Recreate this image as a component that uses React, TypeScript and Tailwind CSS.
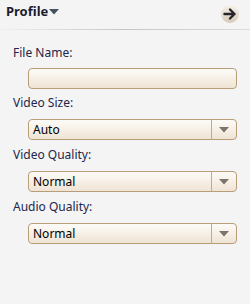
import React from 'react';

interface FieldProps {
  label: string;
  value?: string;
  select?: boolean;
  first?: boolean;
  className?: string;
}

const ArrowButton: React.FC = () => (
  <div className="mt-[5px] h-[18px] w-[18px] rounded-full bg-gradient-to-b from-[#f6f1e8] to-[#d6cbb8] flex items-center justify-center">
    <svg width="14" height="12" viewBox="0 0 14 12">
      <path d="M1.5 6h10M7 1.5l4.5 4.5L7 10.5" fill="none" stroke="#26262c" strokeWidth="2.4" strokeLinecap="round" strokeLinejoin="round" />
    </svg>
  </div>
);

const Field: React.FC<FieldProps> = ({ label, value = '', select, first, className = '' }) => (
  <div className={`flex flex-col ${className}`}>
    <div className="text-[12px] leading-[16px] text-[#23264a]">{label}</div>
    <div
      className={`${first ? 'mt-[7px]' : 'mt-[8px]'} ml-[15px] w-[209px] h-[21px] rounded-[4px] border border-[#b89e78] bg-gradient-to-b from-[#fdfbf8] to-[#efe4d4] flex items-stretch`}
    >
      {select && (
        <>
          <div className="flex-1 flex items-center pl-[4px] text-[12px] leading-[16px] text-black">{value}</div>
          <div className="w-[25px] border-l border-[#c4ab86] flex items-center justify-center">
            <svg width="10" height="6" viewBox="0 0 10 6">
              <path d="M0 0h10L5 5.5z" fill="#7b736c" />
            </svg>
          </div>
        </>
      )}
    </div>
  </div>
);

export default function App() {
  return (
    <div className="w-[250px] h-[304px] bg-[#f4f4f4] font-['Noto_Sans',sans-serif] overflow-hidden">
      <header className="h-[29px] flex items-start justify-between pl-[6px] pr-[11px]">
        <div className="flex items-center pt-[3px]">
          <span className="text-[13px] leading-[16px] font-bold text-[#1c1c30]">Profile</span>
          <svg width="10" height="6" viewBox="0 0 10 6" className="ml-[1px] mt-[1px]">
            <path d="M0 0h10L5 5.5z" fill="#485064" />
          </svg>
        </div>
        <ArrowButton />
      </header>
      <div className="h-px bg-gradient-to-r from-[#f0f0f0] via-[#c6c6c6] to-[#dcdcdc]" />
      <main className="pt-[15px] pl-[13px] flex flex-col">
        <Field label="File Name:" first />
        <Field label="Video Size:" value="Auto" select className="mt-[6px]" />
        <Field label="Video Quality:" value="Normal" select className="mt-[7px]" />
        <Field label="Audio Quality:" value="Normal" select className="mt-[7px]" />
      </main>
    </div>
  );
}
